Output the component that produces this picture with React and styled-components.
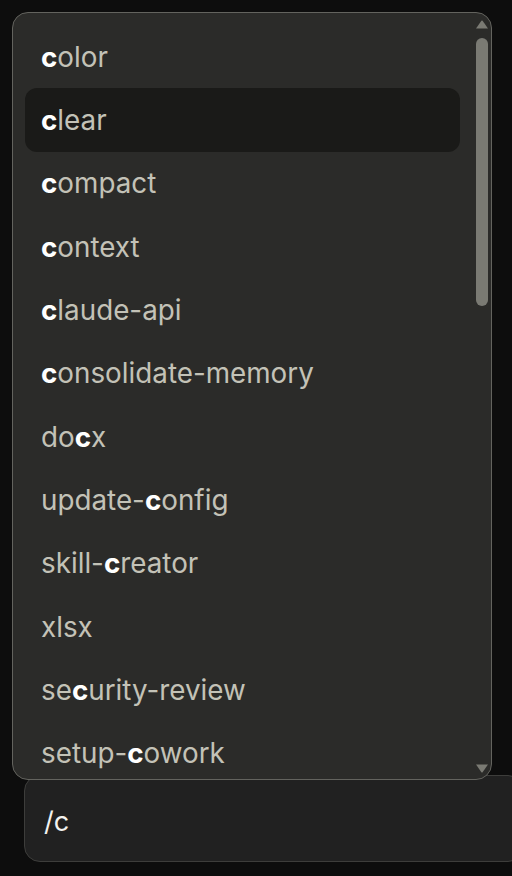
import React from "react";
import styled, { createGlobalStyle } from "styled-components";

const Global = createGlobalStyle`
  html, body { margin: 0; padding: 0; background: #0d0d0d; }
  body { font-family: Inter, "Noto Sans", sans-serif; }
`;

const Page = styled.div`
  width: 512px;
  height: 876px;
  overflow: hidden;
  background: #0d0d0d;
  padding: 12px 0 0 12px;
  box-sizing: border-box;
  display: flex;
  flex-direction: column;
`;

const Popup = styled.div`
  position: relative;
  z-index: 1;
  width: 480px;
  height: 768px;
  box-sizing: border-box;
  border: 1px solid #63635e;
  border-radius: 16px;
  background: #2b2b29;
  display: flex;
  overflow: hidden;
`;

const List = styled.div`
  flex: 1;
  padding: 12px 14px 0 12px;
  overflow: hidden;
  display: flex;
  flex-direction: column;
`;

const Row = styled.div`
  flex: 0 0 63.33px;
  height: 63.33px;
  display: flex;
  align-items: center;
  padding-left: 16px;
  border-radius: 12px;
  background: ${(p) => (p.$active ? "#1a1a18" : "transparent")};
  color: #c3c2b7;
  font-size: 27.8px;
  letter-spacing: 0;
  white-space: pre;
`;

const Match = styled.span`
  color: #ffffff;
  font-weight: 700;
`;

const ScrollCol = styled.div`
  width: 16px;
  margin-right: 1px;
  display: flex;
  flex-direction: column;
  align-items: center;
  padding: 7px 0 6px;
  box-sizing: border-box;
`;

const Thumb = styled.div`
  width: 12px;
  height: 268px;
  margin-top: 9px;
  border-radius: 6px;
  background: #7a7a73;
`;

const Spacer = styled.div`
  flex: 1;
`;

const Arrow = ({ down }) => (
  <svg width="14" height="9" viewBox="0 0 14 9" style={{ display: "block" }}>
    <path
      d={down ? "M1 0.5 H13 L7.6 8.2 Q7 8.8 6.4 8.2 Z" : "M1 8.5 H13 L7.6 0.8 Q7 0.2 6.4 0.8 Z"}
      fill="#7a7a73"
    />
  </svg>
);

const InputBox = styled.div`
  margin-top: -5px;
  margin-left: 12px;
  width: 500px;
  height: 87px;
  box-sizing: border-box;
  border: 1px solid #3d3d3b;
  border-radius: 16px;
  background: #212121;
  display: flex;
  align-items: center;
  padding: 5px 0 0 19px;
  color: #f2f2f0;
  font-size: 27px;
`;

const items = [
  ["", "c", "olor"],
  ["", "c", "lear"],
  ["", "c", "ompact"],
  ["", "c", "ontext"],
  ["", "c", "laude-api"],
  ["", "c", "onsolidate-memory"],
  ["do", "c", "x"],
  ["update-", "c", "onfig"],
  ["skill-", "c", "reator"],
  ["xlsx", "", ""],
  ["se", "c", "urity-review"],
  ["setup-", "c", "owork"],
];

export default function App() {
  return (
    <>
      <Global />
      <Page>
        <Popup>
          <List>
            {items.map(([a, m, b], i) => (
              <Row key={i} $active={i === 1}>
                {a}
                {m && <Match>{m}</Match>}
                {b}
              </Row>
            ))}
          </List>
          <ScrollCol>
            <Arrow />
            <Thumb />
            <Spacer />
            <Arrow down />
          </ScrollCol>
        </Popup>
        <InputBox>/c</InputBox>
      </Page>
    </>
  );
}
